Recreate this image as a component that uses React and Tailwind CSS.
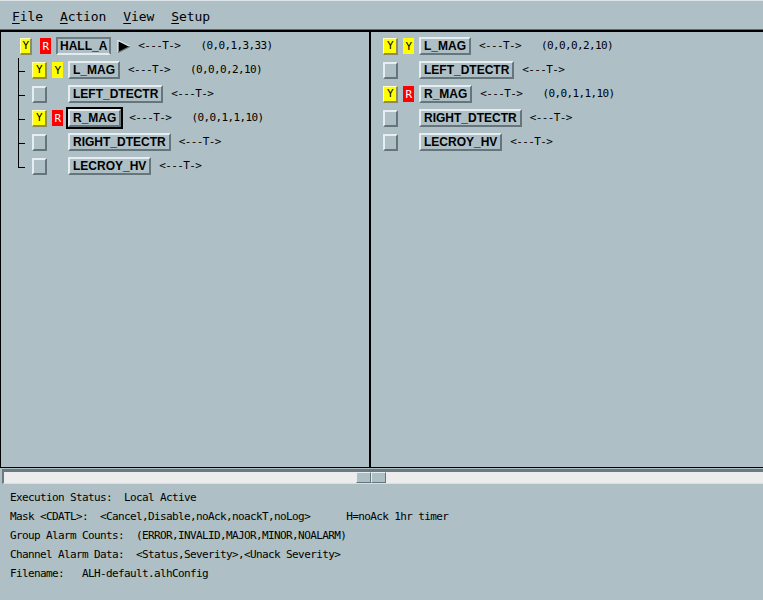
import React from "react"

const mono = "font-['DejaVu_Sans_Mono',monospace] text-[11px] tracking-[-0.62px] whitespace-pre"
const bold = "font-['Liberation_Sans',Arial,sans-serif] font-bold text-[12px]"

const leftRows = [
  { top: true, box: "Y", sev: "R", label: "HALL_A", selected: true, arrow: true, counts: "(0,0,1,3,33)" },
  { box: "Y", sev: "Y", label: "L_MAG", counts: "(0,0,0,2,10)" },
  { label: "LEFT_DTECTR" },
  { box: "Y", sev: "R", label: "R_MAG", focused: true, counts: "(0,0,1,1,10)" },
  { label: "RIGHT_DTECTR" },
  { label: "LECROY_HV", last: true },
]

const rightRows = [
  { box: "Y", sev: "Y", label: "L_MAG", counts: "(0,0,0,2,10)" },
  { label: "LEFT_DTECTR" },
  { box: "Y", sev: "R", label: "R_MAG", counts: "(0,0,1,1,10)" },
  { label: "RIGHT_DTECTR" },
  { label: "LECROY_HV" },
]

function App() {
  return (
    <div className="w-[763px] h-[600px] overflow-hidden bg-[#aebfc6] text-black flex flex-col">
      <MenuBar />
      <div className="h-[438px] flex border-t-2 border-b border-black">
        <div className="w-[371px] border-l border-r-2 border-black pt-[2px] flex flex-col">
          {leftRows.map((r, i) => (
            <TreeRow key={i} row={r} tree={!r.top} />
          ))}
        </div>
        <div className="flex-1 pt-[2px] pl-[12px] flex flex-col">
          {rightRows.map((r, i) => (
            <Row key={i} row={r} />
          ))}
        </div>
      </div>
      <ScrollBar />
      <div className={`${mono} leading-[19px] pt-[4px] pl-[10px] flex flex-col`}>
        <span>Execution Status:  Local Active</span>
        <span>Mask &lt;CDATL&gt;:  &lt;Cancel,Disable,noAck,noackT,noLog&gt;      H=noAck 1hr timer</span>
        <span>Group Alarm Counts:  (ERROR,INVALID,MAJOR,MINOR,NOALARM)</span>
        <span>Channel Alarm Data:  &lt;Status,Severity&gt;,&lt;Unack Severity&gt;</span>
        <span>Filename:   ALH-default.alhConfig</span>
      </div>
    </div>
  )
}

function MenuBar() {
  const items = ["File", "Action", "View", "Setup"]
  return (
    <div className="h-[30px] border-t border-t-[#dde5e8] border-b border-b-[#5f6d73] flex items-center pt-[3px] pl-[12px] gap-[17px] font-['DejaVu_Sans_Mono',monospace] text-[13px] tracking-[-0.1px]">
      {items.map(it => (
        <span key={it}>
          <span className="underline underline-offset-[2px]">{it[0]}</span>
          {it.slice(1)}
        </span>
      ))}
    </div>
  )
}

function TreeRow({ row, tree }) {
  if (!tree) {
    return <div className="pl-[19px]"><Row row={row} narrow /></div>
  }
  return (
    <div className="flex pl-[17px] h-[24px]">
      <div className="w-[14px] flex flex-col">
        <div className="h-[13px] border-l border-black" />
        <div className="h-px w-[7px] bg-black" />
        <div className={`flex-1 ${row.last ? "" : "border-l border-black"}`} />
      </div>
      <Row row={row} />
    </div>
  )
}

function Row({ row, narrow }) {
  return (
    <div className="h-[24px] flex items-center">
      <div className="w-[20px] flex">
        <BevelBox text={row.box} narrow={narrow} />
      </div>
      <div className="w-[16px] flex">
        {row.sev && <SevLabel text={row.sev} />}
      </div>
      <NameButton label={row.label} selected={row.selected} focused={row.focused} />
      {row.arrow && <Arrow />}
      <span className={`${mono} ${row.arrow ? "ml-[7px]" : "ml-[8px]"}`}>&lt;---T-&gt;</span>
      {row.counts && <span className={`${mono} ml-[20px]`}>{row.counts}</span>}
    </div>
  )
}

function BevelBox({ text, narrow }) {
  const w = narrow ? "w-[12px]" : "w-[15px]"
  if (text) {
    return (
      <div className={`${w} h-[17px] bg-[#ffff00] border-t border-l border-t-[#ffffb8] border-l-[#ffffb8] border-b-2 border-r-2 border-b-[#8c8c5c] border-r-[#8c8c5c] flex items-center justify-center ${mono} leading-none`}>
        {text}
      </div>
    )
  }
  return (
    <div className={`${w} h-[17px] border-2 border-t-[#e6eef1] border-l-[#e6eef1] border-b-[#66757b] border-r-[#66757b]`} />
  )
}

function SevLabel({ text }) {
  const c = text === "R" ? "bg-[#ff0000] text-white" : "bg-[#ffff00] text-black"
  return (
    <div className={`w-[11px] h-[16px] ${c} flex items-center justify-center ${mono} leading-none`}>
      {text}
    </div>
  )
}

function NameButton({ label, selected, focused }) {
  const bevel = selected
    ? "border-t-[#6d7c82] border-l-[#6d7c82] border-r-[#6d7c82] border-b-[#e3eaed] px-[2px]"
    : "border-t-[#e6eef1] border-l-[#e6eef1] border-b-[#66757b] border-r-[#66757b] px-[3px]"
  return (
    <div className={`h-[18px] border-2 ${bevel} flex items-center ${bold} leading-none ${focused ? "outline-2 outline-solid outline-black" : ""}`}>
      {label}
    </div>
  )
}

function Arrow() {
  return (
    <svg width="14" height="13" viewBox="0 0 14 13" className="ml-[6px]">
      <polygon points="1,0.5 13,6.5 1,12.5" fill="#000" />
      <polyline points="1,12.5 1,0.5 13,6.5" fill="none" stroke="#e6eef1" strokeWidth="1.2" />
      <polyline points="1,12.5 13,6.5" fill="none" stroke="#66757b" strokeWidth="1.2" />
    </svg>
  )
}

function ScrollBar() {
  return (
    <div className="mt-[1px] ml-[2px] h-[15px] border-t-[3px] border-l-2 border-t-[#6b7a80] border-l-[#6b7a80] border-b border-b-[#d7e0e3] bg-[#ececec] flex pl-[352px]">
      <div className="w-[15px] h-full bg-[#aebfc6] border border-t-[#e6eef1] border-l-[#e6eef1] border-b-[#66757b] border-r-[#66757b]" />
      <div className="w-[15px] h-full bg-[#aebfc6] border border-t-[#e6eef1] border-l-[#e6eef1] border-b-[#66757b] border-r-[#66757b]" />
    </div>
  )
}

export default App
